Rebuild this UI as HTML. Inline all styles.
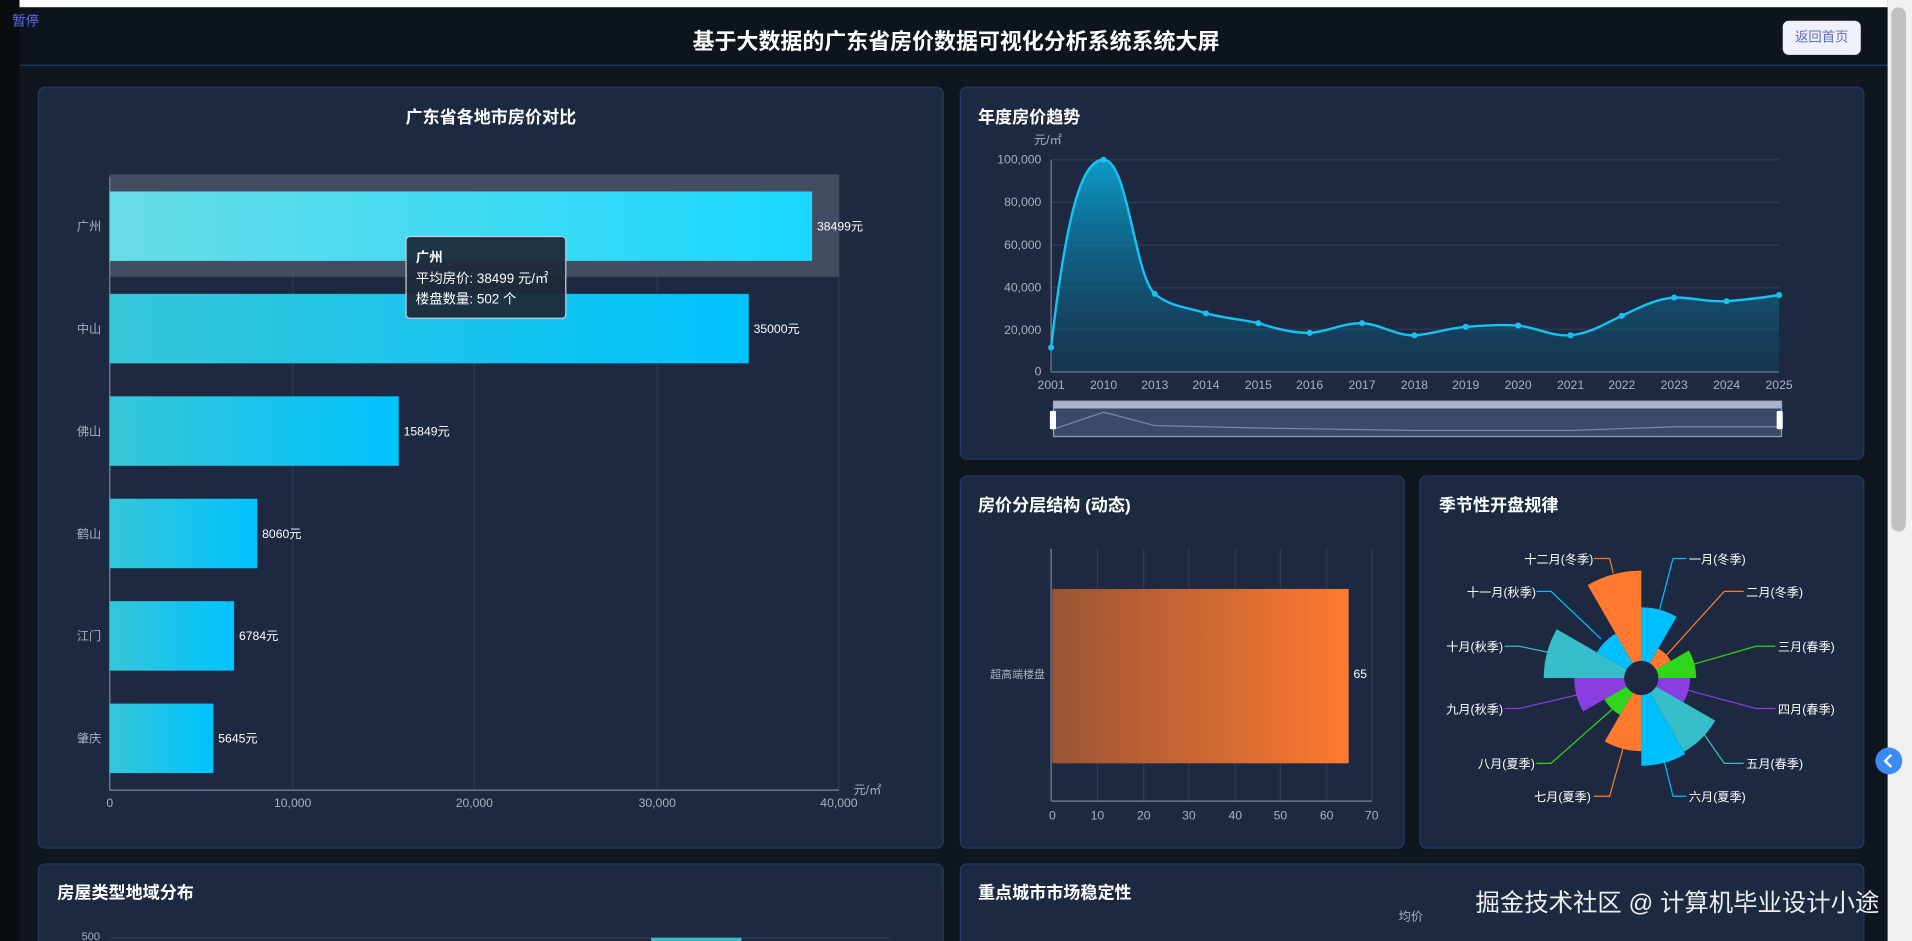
<!DOCTYPE html>
<html><head><meta charset="utf-8"><style>
html,body{margin:0;padding:0;width:1912px;height:941px;overflow:hidden;background:#0d1217;}
.s{position:absolute;left:0;top:0;width:1568px;height:772px;transform:scale(1.21939);transform-origin:0 0;font-family:"Liberation Sans","Noto Sans CJK SC",sans-serif;background:#10161d;overflow:hidden}
.card{position:absolute;background:#1d2940;border:1px solid #24396a;border-radius:6px;box-sizing:border-box}
.t{position:absolute;color:#fff;font-weight:bold;font-size:14px;white-space:nowrap}
</style></head><body><div class="s">
<div style="position:absolute;left:0;top:0;width:16px;height:772px;background:#0a0d10"></div>
<div style="position:absolute;left:16px;top:0;width:1532px;height:6px;background:#fff"></div>
<div style="position:absolute;left:16px;top:6px;width:1532px;height:47px;background:#0e141b;border-bottom:1px solid #1f3a6e"></div>
<div style="position:absolute;left:10px;top:9px;color:#5a6ff0;font-size:11px">暂停</div>
<div style="position:absolute;left:0;width:1568px;top:20px;text-align:center;color:#fff;font-weight:bold;font-size:18px;padding-right:0">基于大数据的广东省房价数据可视化分析系统系统大屏</div>
<div style="position:absolute;left:1462px;top:17px;width:64px;height:28px;background:#eef0fb;border-radius:5px;color:#5b6bbf;font-size:11px;line-height:28px;text-align:center">返回首页</div>
<div style="position:absolute;left:1548px;top:0;width:20px;height:772px;background:#f1f1f1"></div>
<div style="position:absolute;left:1551px;top:6px;width:12px;height:430px;background:#c1c1c1;border-radius:6px"></div>

<div class="card" style="left:31px;top:71px;width:743px;height:625px"></div>
<div class="card" style="left:787px;top:71px;width:742px;height:306px"></div>
<div class="card" style="left:787px;top:390px;width:365px;height:306px"></div>
<div class="card" style="left:1164px;top:390px;width:365px;height:306px"></div>
<div class="card" style="left:31px;top:708px;width:743px;height:80px"></div>
<div class="card" style="left:787px;top:708px;width:742px;height:80px"></div>

<div class="t" style="left:31px;width:743px;text-align:center;top:86px">广东省各地市房价对比</div>
<div class="t" style="left:802px;top:86px">年度房价趋势</div>
<div class="t" style="left:802px;top:404px">房价分层结构 (动态)</div>
<div class="t" style="left:1180px;top:404px">季节性开盘规律</div>
<div class="t" style="left:47px;top:722px">房屋类型地域分布</div>
<div class="t" style="left:802px;top:722px">重点城市市场稳定性</div>

<svg style="position:absolute;left:0;top:0" width="1568" height="772" font-family="Liberation Sans, Noto Sans CJK SC, sans-serif">
<defs>
<linearGradient id="gb" x1="0" x2="1" y1="0" y2="0"><stop offset="0" stop-color="#37c6d8"/><stop offset="1" stop-color="#00c3ff"/></linearGradient>
<linearGradient id="gb1" x1="0" x2="1"><stop offset="0" stop-color="#68dce6"/><stop offset="1" stop-color="#1ad8ff"/></linearGradient>
<linearGradient id="go" x1="0" x2="1"><stop offset="0" stop-color="#9a5436"/><stop offset="1" stop-color="#ff7a2f"/></linearGradient>
<linearGradient id="ga" x1="0" x2="0" y1="0" y2="1"><stop offset="0" stop-color="#0aa6d8" stop-opacity=".9"/><stop offset="1" stop-color="#0a4a6a" stop-opacity=".35"/></linearGradient>
</defs>
<!-- chart 1 -->
<g stroke="#2c3a52" stroke-width="1"><line x1="240" y1="143" x2="240" y2="648"/><line x1="389" y1="143" x2="389" y2="648"/><line x1="539" y1="143" x2="539" y2="648"/><line x1="688" y1="143" x2="688" y2="648"/></g>
<rect x="90" y="143" width="598" height="84" fill="#4a5468" opacity=".85"/>
<line x1="90" y1="145" x2="90" y2="648" stroke="#7c8799"/><line x1="90" y1="648" x2="688" y2="648" stroke="#7c8799"/>
<rect x="90" y="157" width="576" height="57" fill="url(#gb1)"/>
<rect x="90" y="241" width="524" height="57" fill="url(#gb)"/>
<rect x="90" y="325" width="237" height="57" fill="url(#gb)"/>
<rect x="90" y="409" width="121" height="57" fill="url(#gb)"/>
<rect x="90" y="493" width="102" height="57" fill="url(#gb)"/>
<rect x="90" y="577" width="85" height="57" fill="url(#gb)"/>
<g fill="#fff" font-size="10"><text x="670" y="189">38499元</text><text x="618" y="273">35000元</text><text x="331" y="357">15849元</text><text x="215" y="441">8060元</text><text x="196" y="525">6784元</text><text x="179" y="609">5645元</text></g>
<g fill="#a9b2c2" font-size="10" text-anchor="end"><text x="83" y="189">广州</text><text x="83" y="273">中山</text><text x="83" y="357">佛山</text><text x="83" y="441">鹤山</text><text x="83" y="525">江门</text><text x="83" y="609">肇庆</text></g>
<g fill="#a9b2c2" font-size="10" text-anchor="middle"><text x="90" y="662">0</text><text x="240" y="662">10,000</text><text x="389" y="662">20,000</text><text x="539" y="662">30,000</text><text x="688" y="662">40,000</text></g>
<text x="700" y="651" fill="#a9b2c2" font-size="10">元/㎡</text>
<rect x="333" y="194" width="131" height="67" rx="3" fill="#1c2a3b" fill-opacity=".95" stroke="#c9d1dc"/>
<g fill="#fff" font-size="11"><text x="341" y="215" font-weight="bold">广州</text><text x="341" y="232">平均房价: 38499 元/㎡</text><text x="341" y="249">楼盘数量: 502 个</text></g>
<!-- chart 2 -->
<g stroke="#2f3c55"><line x1="862" y1="131" x2="1459" y2="131"/><line x1="862" y1="166" x2="1459" y2="166"/><line x1="862" y1="201" x2="1459" y2="201"/><line x1="862" y1="236" x2="1459" y2="236"/><line x1="862" y1="270" x2="1459" y2="270"/></g>
<line x1="862" y1="305" x2="1459" y2="305" stroke="#7c8799"/><line x1="862" y1="131" x2="862" y2="305" stroke="#7c8799"/>
<g fill="#a9b2c2" font-size="10" text-anchor="end"><text x="854" y="134">100,000</text><text x="854" y="169">80,000</text><text x="854" y="204">60,000</text><text x="854" y="239">40,000</text><text x="854" y="274">20,000</text><text x="854" y="308">0</text></g>
<text x="848" y="118" fill="#a9b2c2" font-size="10">元/㎡</text>
<g fill="#a9b2c2" font-size="10" text-anchor="middle"><text x="862" y="319">2001</text><text x="905" y="319">2010</text><text x="947" y="319">2013</text><text x="989" y="319">2014</text><text x="1032" y="319">2015</text><text x="1074" y="319">2016</text><text x="1117" y="319">2017</text><text x="1160" y="319">2018</text><text x="1202" y="319">2019</text><text x="1245" y="319">2020</text><text x="1288" y="319">2021</text><text x="1330" y="319">2022</text><text x="1373" y="319">2023</text><text x="1416" y="319">2024</text><text x="1459" y="319">2025</text></g>
<path d="M862,285 C875,170 888,131 905,131 C925,131 930,225 947,241 C960,252 975,252 989,257 C1005,261 1018,262 1032,265 C1048,270 1060,273 1074,273 C1090,272 1100,265 1117,265 C1133,266 1143,275 1160,275 C1175,274 1188,269 1202,268 C1218,267 1230,266 1245,267 C1262,269 1272,276 1288,275 C1305,273 1315,266 1330,259 C1345,252 1358,245 1373,244 C1390,244 1400,248 1416,247 C1432,246 1445,244 1459,242 L1459,305 L862,305 Z" fill="url(#ga)"/>
<path d="M862,285 C875,170 888,131 905,131 C925,131 930,225 947,241 C960,252 975,252 989,257 C1005,261 1018,262 1032,265 C1048,270 1060,273 1074,273 C1090,272 1100,265 1117,265 C1133,266 1143,275 1160,275 C1175,274 1188,269 1202,268 C1218,267 1230,266 1245,267 C1262,269 1272,276 1288,275 C1305,273 1315,266 1330,259 C1345,252 1358,245 1373,244 C1390,244 1400,248 1416,247 C1432,246 1445,244 1459,242" fill="none" stroke="#19c2f2" stroke-width="2"/>
<g fill="#19c2f2"><circle cx="862" cy="285" r="2.5"/><circle cx="905" cy="131" r="2.5"/><circle cx="947" cy="241" r="2.5"/><circle cx="989" cy="257" r="2.5"/><circle cx="1032" cy="265" r="2.5"/><circle cx="1074" cy="273" r="2.5"/><circle cx="1117" cy="265" r="2.5"/><circle cx="1160" cy="275" r="2.5"/><circle cx="1202" cy="268" r="2.5"/><circle cx="1245" cy="267" r="2.5"/><circle cx="1288" cy="275" r="2.5"/><circle cx="1330" cy="259" r="2.5"/><circle cx="1373" cy="244" r="2.5"/><circle cx="1416" cy="247" r="2.5"/><circle cx="1459" cy="242" r="2.5"/></g>
<rect x="864" y="329" width="597" height="29" fill="#3a4a68" stroke="#8fa1c0"/>
<rect x="864" y="329" width="597" height="6" fill="#a9b6c8"/>
<path d="M864,352 L905,338 L947,349 L1032,351 L1160,353 L1288,353 L1373,350 L1459,350" fill="none" stroke="#7b8cab"/>
<rect x="861" y="337" width="5" height="15" rx="1" fill="#fff"/><rect x="1457" y="337" width="5" height="15" rx="1" fill="#fff"/>
<!-- chart 3 -->
<g stroke="#2f3c55"><line x1="900" y1="450" x2="900" y2="657"/><line x1="938" y1="450" x2="938" y2="657"/><line x1="975" y1="450" x2="975" y2="657"/><line x1="1013" y1="450" x2="1013" y2="657"/><line x1="1050" y1="450" x2="1050" y2="657"/><line x1="1088" y1="450" x2="1088" y2="657"/><line x1="1125" y1="450" x2="1125" y2="657"/></g>
<line x1="862" y1="450" x2="862" y2="657" stroke="#7c8799"/><line x1="862" y1="657" x2="1125" y2="657" stroke="#7c8799"/>
<rect x="863" y="483" width="243" height="143" fill="url(#go)"/>
<text x="1110" y="556" fill="#fff" font-size="10">65</text>
<text x="857" y="556" fill="#a9b2c2" font-size="9" text-anchor="end">超高端楼盘</text>
<g fill="#a9b2c2" font-size="10" text-anchor="middle"><text x="863" y="672">0</text><text x="900" y="672">10</text><text x="938" y="672">20</text><text x="975" y="672">30</text><text x="1013" y="672">40</text><text x="1050" y="672">50</text><text x="1088" y="672">60</text><text x="1125" y="672">70</text></g>
<!-- rose -->
<path d="M1346,542 L1346,498 A58 58 0 0 1 1375,505.8 L1353,543.9 A14 14 0 0 0 1346,542Z" fill="#00bfff"/>
<path d="M1353,543.9 L1360,531.8 A28 28 0 0 1 1370.2,542 L1358.1,549 A14 14 0 0 0 1353,543.9Z" fill="#ff7a2f"/>
<path d="M1358.1,549 L1385,533.5 A45 45 0 0 1 1391,556 L1360,556 A14 14 0 0 0 1358.1,549Z" fill="#2fd61a"/>
<path d="M1360,556 L1386,556 A40 40 0 0 1 1380.6,576 L1358.1,563 A14 14 0 0 0 1360,556Z" fill="#8a3ee0"/>
<path d="M1358.1,563 L1406.6,591 A70 70 0 0 1 1381,616.6 L1353,568.1 A14 14 0 0 0 1358.1,563Z" fill="#36bfca"/>
<path d="M1353,568.1 L1382,618.4 A72 72 0 0 1 1346,628 L1346,570 A14 14 0 0 0 1353,568.1Z" fill="#00bfff"/>
<path d="M1346,570 L1346,616 A60 60 0 0 1 1316,608 L1339,568.1 A14 14 0 0 0 1346,570Z" fill="#ff7a2f"/>
<path d="M1339,568.1 L1328.5,586.3 A35 35 0 0 1 1315.7,573.5 L1333.9,563 A14 14 0 0 0 1339,568.1Z" fill="#2fd61a"/>
<path d="M1333.9,563 L1298.4,583.5 A55 55 0 0 1 1291,556 L1332,556 A14 14 0 0 0 1333.9,563Z" fill="#8a3ee0"/>
<path d="M1332,556 L1266,556 A80 80 0 0 1 1276.7,516 L1333.9,549 A14 14 0 0 0 1332,556Z" fill="#36bfca"/>
<path d="M1333.9,549 L1309.6,535 A42 42 0 0 1 1325,519.6 L1339,543.9 A14 14 0 0 0 1333.9,549Z" fill="#00bfff"/>
<path d="M1339,543.9 L1302,479.8 A88 88 0 0 1 1346,468 L1346,542 A14 14 0 0 0 1339,543.9Z" fill="#ff7a2f"/>
<g fill="none" stroke-width="1">
<polyline points="1361,500 1372,458 1383,458" stroke="#00bfff"/>
<polyline points="1366,538 1414,485 1430,485" stroke="#ff7a2f"/>
<polyline points="1388,545 1440,530 1456,530" stroke="#2fd61a"/>
<polyline points="1384,566 1440,581 1456,581" stroke="#8a3ee0"/>
<polyline points="1396,600 1414,626 1430,626" stroke="#36bfca"/>
<polyline points="1365,625 1372,653 1383,653" stroke="#00bfff"/>
<polyline points="1331,614 1320,653 1307,653" stroke="#ff7a2f"/>
<polyline points="1324,580 1272,626 1260,626" stroke="#2fd61a"/>
<polyline points="1293,570 1246,581 1234,581" stroke="#8a3ee0"/>
<polyline points="1270,535 1246,530 1234,530" stroke="#36bfca"/>
<polyline points="1313,524 1272,485 1260,485" stroke="#00bfff"/>
<polyline points="1323,470 1320,458 1307,458" stroke="#ff7a2f"/>
</g>
<g fill="#fff" font-size="10" stroke="#1d2940" stroke-width="2" paint-order="stroke">
<text x="1385" y="462">一月(冬季)</text><text x="1432" y="489">二月(冬季)</text><text x="1458" y="534">三月(春季)</text><text x="1458" y="585">四月(春季)</text><text x="1432" y="630">五月(春季)</text><text x="1385" y="657">六月(夏季)</text>
<text x="1258" y="657">七月(夏季)</text><text x="1212" y="630">八月(夏季)</text><text x="1186" y="585">九月(秋季)</text><text x="1186" y="534">十月(秋季)</text><text x="1203" y="489">十一月(秋季)</text><text x="1250" y="462">十二月(冬季)</text>
</g>
<!-- bottom -->
<text x="82" y="771" fill="#a9b2c2" font-size="9" text-anchor="end">500</text>
<line x1="90" y1="769" x2="730" y2="769" stroke="#2f3c55"/>
<rect x="534" y="769" width="74" height="5" fill="#36bfca"/>
<text x="1157" y="755" fill="#a9b2c2" font-size="10" text-anchor="middle">均价</text>
<text x="1210" y="747" fill="#fff" font-size="20" fill-opacity=".92">掘金技术社区 @ 计算机毕业设计小途</text>
<circle cx="1549" cy="624" r="11" fill="#3b8af5"/><path d="M1551,619 L1546,624 L1551,629" fill="none" stroke="#fff" stroke-width="2"/>
</svg>
</div></body></html>
